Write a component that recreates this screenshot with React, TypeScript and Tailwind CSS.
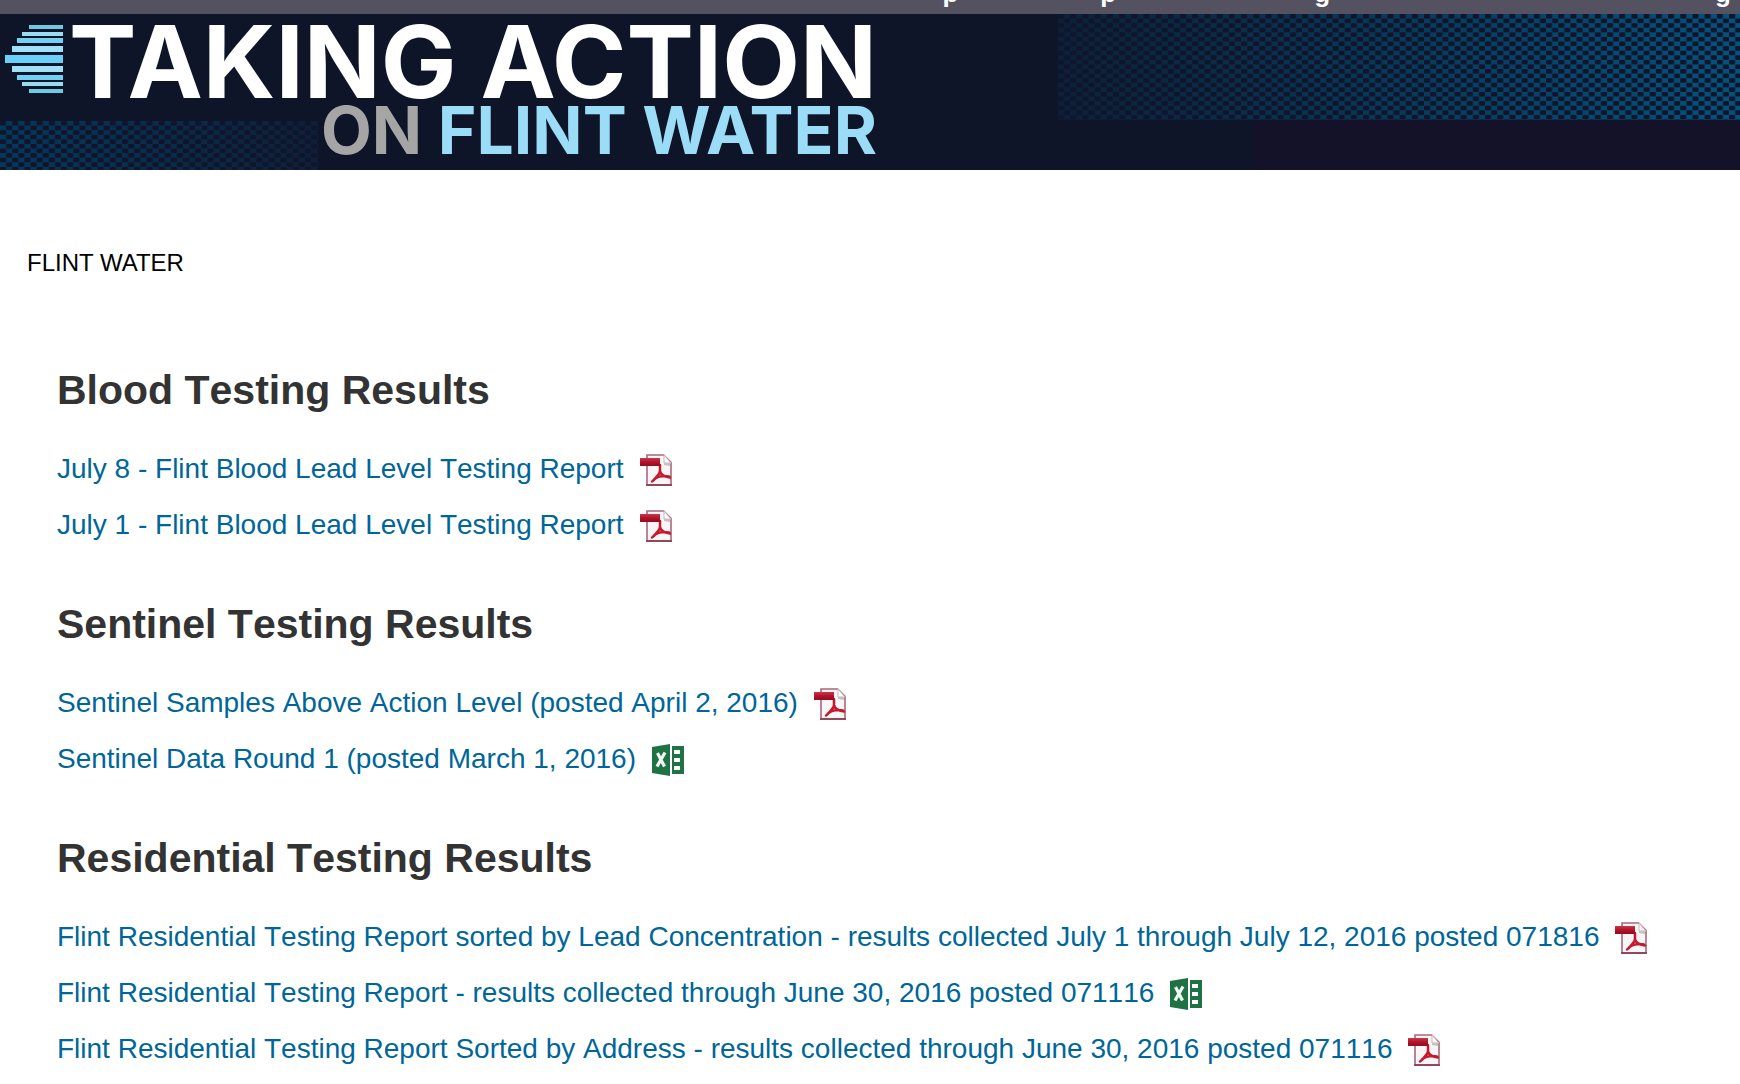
type Kind = "pdf" | "xls";

const sections: { title: string; links: { text: string; kind: Kind }[] }[] = [
  {
    title: "Blood Testing Results",
    links: [
      { text: "July 8 - Flint Blood Lead Level Testing Report", kind: "pdf" },
      { text: "July 1 - Flint Blood Lead Level Testing Report", kind: "pdf" },
    ],
  },
  {
    title: "Sentinel Testing Results",
    links: [
      { text: "Sentinel Samples Above Action Level (posted April 2, 2016)", kind: "pdf" },
      { text: "Sentinel Data Round 1 (posted March 1, 2016)", kind: "xls" },
    ],
  },
  {
    title: "Residential Testing Results",
    links: [
      {
        text: "Flint Residential Testing Report sorted by Lead Concentration - results collected July 1 through July 12, 2016 posted 071816",
        kind: "pdf",
      },
      {
        text: "Flint Residential Testing Report - results collected through June 30, 2016 posted 071116",
        kind: "xls",
      },
      {
        text: "Flint Residential Testing Report Sorted by Address - results collected through June 30, 2016 posted 071116",
        kind: "pdf",
      },
    ],
  },
];

function PdfIcon() {
  return (
    <svg viewBox="0 0 32 32" className="size-8 shrink-0" aria-hidden="true">
      <defs>
        <linearGradient id="ribbon" x1="0" y1="0" x2="0" y2="1">
          <stop offset="0" stopColor="#c8384a" />
          <stop offset="0.5" stopColor="#b3122a" />
          <stop offset="1" stopColor="#8e0f22" />
        </linearGradient>
      </defs>
      <path d="M7 1H24L31 8V31H7Z" fill="#f7f5f6" stroke="#a8687a" strokeWidth="1.6" />
      <path d="M6 31H32" stroke="#8d4a5c" strokeWidth="2" />
      <path d="M24 0L32 8V0Z" fill="#fff" />
      <path d="M24 1V9H31Z" fill="#fff" stroke="#c9b5bb" strokeWidth="1" />
      <path d="M24 9H30V12L24 11Z" fill="#c4c2c3" />
      <path
        d="M20 11V17C20 19.500 18 21 16 23.500C14.500 25.500 13 27 12 27.500M20 17C20.500 20 23 22.500 30 23.500M14 25.500C17 23 23 21.500 29 22.500"
        fill="none"
        stroke="#c4182c"
        strokeWidth="2.500"
        strokeLinecap="round"
      />
      <path d="M0 4H20V12H0Z" fill="url(#ribbon)" />
    </svg>
  );
}

function XlsIcon() {
  return (
    <svg viewBox="0 0 32 32" className="size-8 shrink-0" aria-hidden="true">
      <path d="M0 3L18 0V32L0 29Z" fill="#1f7244" />
      <path d="M20 2H32V30H20Z" fill="#1f7244" />
      <path d="M22 6H28V10H22ZM22 14H28V18H22ZM22 22H28V26H22Z" fill="#fff" />
      <path d="M5.500 9L12.500 22.500M13 8.500L5 22.500" stroke="#f2f7f4" strokeWidth="3.200" />
    </svg>
  );
}

const stripes = [
  [29, 25, 4, "#6fc9e4"],
  [22, 32, 4, "#9adcef"],
  [17, 38, 5, "#72d0f5"],
  [12, 46, 6, "#a0e0f8"],
  [5, 55, 8, "#68d0fa"],
  [12, 66, 6, "#a0e0f8"],
  [17, 75, 5, "#72d0f5"],
  [22, 82, 4, "#9adcef"],
  [29, 89, 4, "#6fc9e4"],
] as const;

function Stripes() {
  return (
    <svg viewBox="5 25 58 68" className="mt-[11px] h-[68px] w-[58px] shrink-0" aria-hidden="true">
      {stripes.map(([x, y, h, fill]) => (
        <rect key={y} x={x} y={y} width={63 - x} height={h} fill={fill} />
      ))}
    </svg>
  );
}

function Mesh({ id, from, to, className }: { id: string; from: string; to: string; className: string }) {
  return (
    <svg className={className} aria-hidden="true">
      <defs>
        <linearGradient id={id + "-fade"}>
          <stop offset="0" stopColor={from} />
          <stop offset="1" stopColor={to} />
        </linearGradient>
        <pattern id={id + "-holes"} width="12.200" height="9.170" patternUnits="userSpaceOnUse">
          <rect x="0" y="0" width="6.100" height="4.580" rx="1.200" fill="#0f152b" />
          <rect x="6.100" y="4.580" width="6.100" height="4.580" rx="1.200" fill="#0f152b" />
        </pattern>
      </defs>
      <rect width="100%" height="100%" fill={`url(#${id}-fade)`} />
      <rect width="100%" height="100%" fill={`url(#${id}-holes)`} />
    </svg>
  );
}

export default function App() {
  return (
    <div className="min-h-screen bg-white font-['Liberation_Sans',Arial,sans-serif]">
      <div className="flex h-[14px] items-end justify-end overflow-hidden bg-[#545261] pb-2 text-[26px] leading-[26px] font-bold text-white">
        <span className="mr-[142px]">p</span>
        <span className="mr-[198px]">p</span>
        <span className="mr-[385px]">g</span>
        <span className="mr-[9px]">g</span>
      </div>
      <header className="relative flex h-[156px] overflow-hidden bg-[#0f1529]">
        <div className="absolute right-0 bottom-0 h-[50px] w-[28%] bg-[#131229]" />
        <Mesh id="right" from="#0c2038" to="#06527c" className="absolute top-0 right-0 h-[106px] w-[39.2%]" />
        <Mesh id="left" from="#06385c" to="#0e1f38" className="absolute bottom-0 left-0 h-[49px] w-[318px]" />
        <div className="relative flex gap-[6px] pl-[5px]">
          <Stripes />
          <h1 className="flex flex-col items-end font-['Inter',sans-serif] font-bold text-white">
            <span className="text-[101px] leading-[94px] whitespace-nowrap">TAKING ACTION</span>
            <span className="text-[66px] leading-[44px] whitespace-nowrap text-[#9bdcf7]">
              <span className="text-[#a5a5a5]">ON</span> FLINT WATER
            </span>
          </h1>
        </div>
      </header>
      <main className="pb-4">
        <p className="px-[27px] pt-[78px] text-[24px] leading-[30px] text-black">FLINT WATER</p>
        <div className="px-[57px] pt-[82px] [font-kerning:none]">
          {sections.map((s) => (
            <section key={s.title} className="pb-10">
              <h2 className="pb-[22px] text-[41px] leading-[60px] font-bold text-[#333]">{s.title}</h2>
              <ul>
                {s.links.map((l) => (
                  <li key={l.text} className="flex h-[56px] items-center">
                    <a href="#" className="flex items-start gap-4 text-[28px] leading-[30px] whitespace-nowrap text-[#006699]">
                      {l.text}
                      {l.kind === "pdf" ? <PdfIcon /> : <XlsIcon />}
                    </a>
                  </li>
                ))}
              </ul>
            </section>
          ))}
        </div>
      </main>
    </div>
  );
}
